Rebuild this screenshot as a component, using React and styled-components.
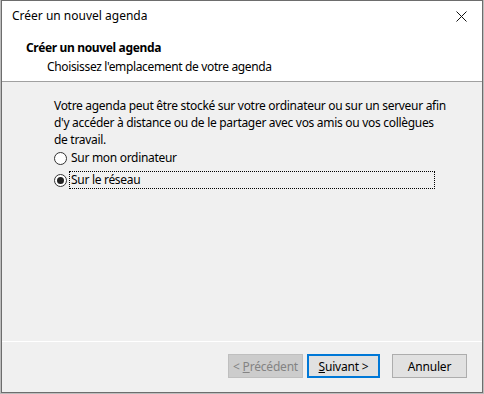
import React from "react";
import styled, { createGlobalStyle } from "styled-components";

const GlobalStyle = createGlobalStyle`
  html, body {
    margin: 0;
    padding: 0;
    background: #b9b9b9;
  }
  body {
    font-family: "Segoe UI", "Noto Sans", "Liberation Sans", sans-serif;
    font-size: 12px;
    color: #000;
  }
`;

const Frame = styled.div`
  width: 484px;
  height: 394px;
  box-sizing: border-box;
  padding: 0 1px 1px 1px;
  background: #bdbdbd;
`;

const Window = styled.div`
  height: 393px;
  box-sizing: border-box;
  border: 1px solid #6d6d6d;
  display: flex;
  flex-direction: column;
  background: #f0f0f0;
`;

const TitleBar = styled.div`
  height: 31px;
  display: flex;
  align-items: center;
  justify-content: space-between;
  padding: 0 15px 1px 10px;
  box-sizing: border-box;
  background: #fff;
`;

const Title = styled.span`
  line-height: 16px;
`;

const CloseIcon = () => (
  <svg width="11" height="11" viewBox="0 0 11 11">
    <path d="M0.5 0.5 L10.5 10.5 M10.5 0.5 L0.5 10.5" stroke="#111" strokeWidth="1" />
  </svg>
);

const Header = styled.div`
  background: #fff;
  border-bottom: 1px solid #a0a0a0;
  padding: 8px 0 6px 24px;
  display: flex;
  flex-direction: column;
  gap: 3px;
  letter-spacing: -0.35px;
`;

const Heading = styled.div`
  font-weight: bold;
  line-height: 16px;
`;

const Subtitle = styled.div`
  line-height: 16px;
  padding-left: 21px;
`;

const Body = styled.div`
  flex: 1;
  padding: 15px 0 0 52px;
  border-bottom: 1px solid #fff;
  letter-spacing: -0.3px;
`;

const Intro = styled.p`
  margin: 0;
  line-height: 17px;
  white-space: nowrap;
`;

const Options = styled.div`
  margin-top: 1px;
  display: flex;
  flex-direction: column;
  gap: 4px;
`;

const Option = styled.label`
  height: 18px;
  display: flex;
  align-items: center;
  gap: 2px;
`;

const Radio = styled.span`
  width: 13px;
  height: 13px;
  box-sizing: border-box;
  border: 1px solid #333;
  border-radius: 50%;
  background: #fff;
  display: flex;
  align-items: center;
  justify-content: center;
  &::after {
    content: "";
    width: 7px;
    height: 7px;
    border-radius: 50%;
    background: ${(p) => (p.checked ? "#222" : "transparent")};
  }
`;

const OptionText = styled.span`
  height: 18px;
  line-height: 16px;
  box-sizing: border-box;
  padding: 0 1px;
  border: 1px dotted ${(p) => (p.focused ? "#000" : "transparent")};
  width: ${(p) => (p.focused ? "366px" : "auto")};
`;

const Footer = styled.div`
  height: 50px;
  display: flex;
  justify-content: flex-end;
  align-items: flex-start;
  padding: 12px 15px 0 0;
  box-sizing: border-box;
`;

const Button = styled.button`
  width: ${(p) => p.w || 75}px;
  height: 24px;
  margin-left: ${(p) => p.gap || 0}px;
  box-sizing: border-box;
  font-family: inherit;
  font-size: 12px;
  letter-spacing: -0.2px;
  padding: 0;
  background: ${(p) => (p.disabled ? "#cccccc" : "#e1e1e1")};
  color: ${(p) => (p.disabled ? "#838383" : "#000")};
  border: ${(p) =>
    p.primary ? "2px solid #0078d7" : p.disabled ? "1px solid #bfbfbf" : "1px solid #adadad"};
  u {
    text-decoration: underline;
  }
`;

export default function App() {
  return (
    <Frame>
      <GlobalStyle />
      <Window>
        <TitleBar>
          <Title>Créer un nouvel agenda</Title>
          <CloseIcon />
        </TitleBar>
        <Header>
          <Heading>Créer un nouvel agenda</Heading>
          <Subtitle>Choisissez l'emplacement de votre agenda</Subtitle>
        </Header>
        <Body>
          <Intro>
            Votre agenda peut être stocké sur votre ordinateur ou sur un serveur afin
            <br />
            d'y accéder à distance ou de le partager avec vos amis ou vos collègues
            <br />
            de travail.
          </Intro>
          <Options>
            <Option>
              <Radio />
              <OptionText>Sur mon ordinateur</OptionText>
            </Option>
            <Option>
              <Radio checked />
              <OptionText focused>Sur le réseau</OptionText>
            </Option>
          </Options>
        </Body>
        <Footer>
          <Button disabled w={75}>
            &lt; <u>P</u>récédent
          </Button>
          <Button primary w={73} gap={4}>
            <u>S</u>uivant &gt;
          </Button>
          <Button w={75} gap={12}>
            Annuler
          </Button>
        </Footer>
      </Window>
    </Frame>
  );
}
